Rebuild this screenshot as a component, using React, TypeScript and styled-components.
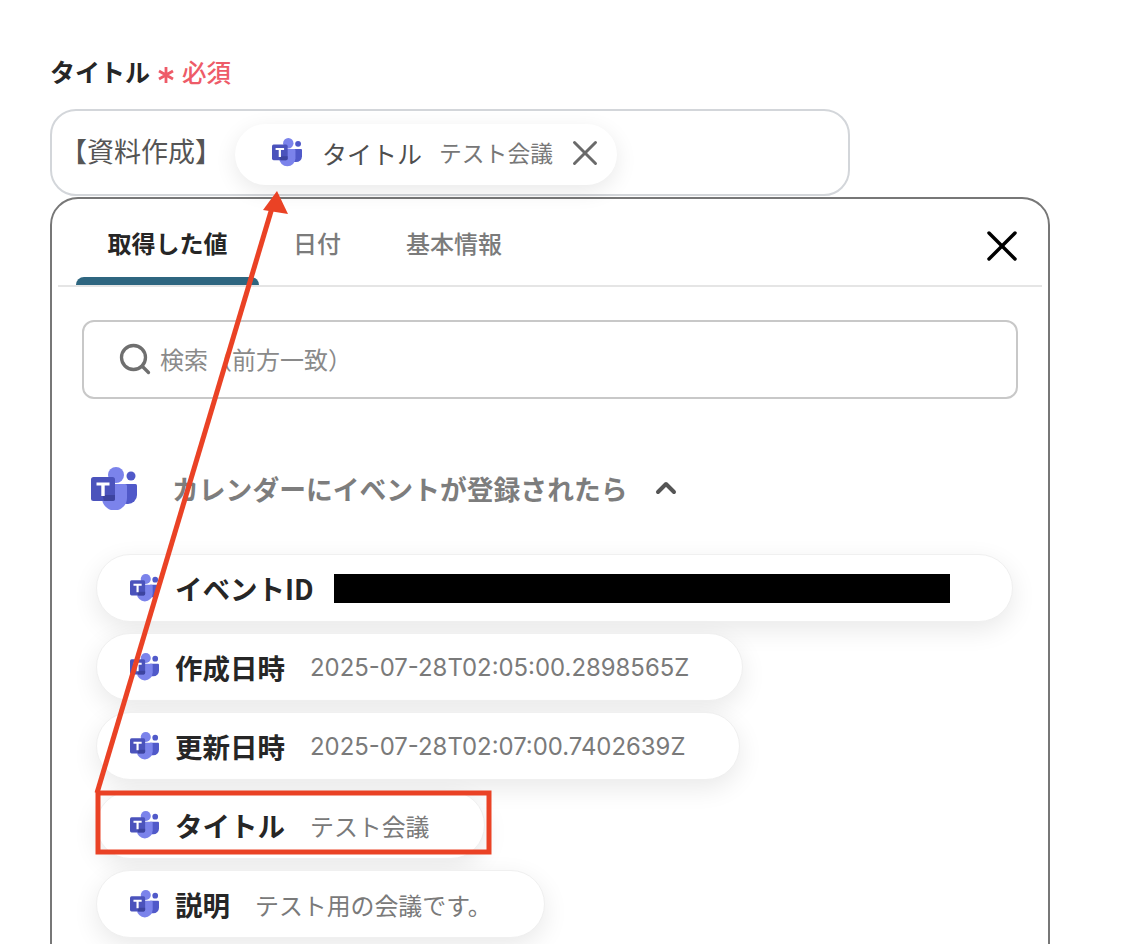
import React from "react";
import styled, { createGlobalStyle } from "styled-components";
import { X, Search, ChevronUp } from "lucide-react";

const Global = createGlobalStyle`
  html, body { margin: 0; padding: 0; background: #fff; overflow: hidden; }
  body { font-family: "Noto Sans CJK JP", "Noto Sans", sans-serif; }
`;

const Page = styled.div`
  position: relative;
  width: 1134px;
  height: 944px;
  overflow: hidden;
  box-sizing: border-box;
  padding: 50px 84px 0 50px;
  background: #fff;
`;

const FieldLabel = styled.div`
  display: flex;
  align-items: center;
  height: 42px;
  font-size: 25px;
  font-weight: 700;
  color: #262626;
`;

const Required = styled.span`
  display: flex;
  align-items: center;
  margin-left: 7px;
  font-size: 24.5px;
  font-weight: 500;
  color: #ee5b68;
`;

const Asterisk = styled.svg`
  width: 18px;
  height: 18px;
  margin: 7px 7px 0 0;
`;

const TextBox = styled.div`
  display: flex;
  align-items: center;
  box-sizing: border-box;
  width: 800px;
  height: 87px;
  margin-top: 17px;
  padding: 4px 0 0 8px;
  border: 2px solid #d3d6da;
  border-radius: 26px;
  color: #555;
`;

const Prefix = styled.span`
  width: 175px;
  flex: none;
  margin-bottom: 8px;
  font-size: 27px;
  white-space: nowrap;
`;

const Chip = styled.div`
  display: flex;
  align-items: center;
  box-sizing: border-box;
  width: 382px;
  height: 61px;
  padding: 0 0 4px 37px;
  border-radius: 31px;
  background: #fff;
  box-shadow: 0 6px 22px rgba(0, 0, 0, 0.09);
`;

const ChipName = styled.span`
  margin-left: 20px;
  font-size: 25px;
  color: #4e4e4e;
  white-space: nowrap;
`;

const ChipValue = styled.span`
  margin-left: 17px;
  font-size: 22.8px;
  color: #777;
  white-space: nowrap;
`;

const ChipClose = styled(X)`
  margin-left: 11px;
  color: #6a6a6a;
  flex: none;
`;

const Popup = styled.div`
  box-sizing: border-box;
  width: 1000px;
  height: 780px;
  margin-top: 1px;
  padding: 0 6px;
  border: 2px solid #777;
  border-radius: 28px;
  background: #fff;
`;

const TabBar = styled.div`
  display: flex;
  align-items: flex-start;
  justify-content: space-between;
  box-sizing: border-box;
  height: 88px;
  padding-left: 18px;
  border-bottom: 2px solid #e5e5e5;
`;

const Tabs = styled.div`
  display: flex;
  height: 86px;
`;

const Tab = styled.div<{ $active?: boolean; $width: number }>`
  position: relative;
  display: flex;
  align-items: center;
  justify-content: center;
  box-sizing: border-box;
  width: ${(p) => p.$width}px;
  padding-top: 1px;
  font-size: 24px;
  font-weight: ${(p) => (p.$active ? 700 : 500)};
  color: ${(p) => (p.$active ? "#262626" : "#7b7b7b")};

  &::after {
    content: "";
    display: ${(p) => (p.$active ? "block" : "none")};
    position: absolute;
    left: 0;
    right: 0;
    bottom: 0;
    height: 8px;
    background: #2e6680;
    border-radius: 8px 8px 0 0;
  }
`;

const CloseButton = styled(X)`
  flex: none;
  color: #000;
  margin: 21px 14px 0 0;
`;

const SearchBox = styled.div`
  display: flex;
  align-items: center;
  box-sizing: border-box;
  width: 936px;
  height: 79px;
  margin: 33px 0 0 24px;
  padding: 0 0 2px 33px;
  border: 2px solid #c8c8c8;
  border-radius: 12px;
  font-size: 24px;
  color: #8a8a8a;
`;

const SearchIcon = styled(Search)`
  color: #6f6f6f;
  margin-right: 7px;
  flex: none;
`;

const Section = styled.div`
  display: flex;
  align-items: center;
  height: 60px;
  margin: 59px 0 0 33px;
`;

const SectionTitle = styled.span`
  margin-left: 35px;
  font-size: 26.8px;
  font-weight: 700;
  color: #7d7d7d;
  white-space: nowrap;
`;

const SectionChevron = styled(ChevronUp)`
  margin-left: 22px;
  color: #555;
`;

const RowList = styled.div`
  display: flex;
  flex-direction: column;
  align-items: flex-start;
  gap: 11px;
  margin: 36px 0 0 38px;
`;

const Row = styled.div<{ $width: number }>`
  display: flex;
  align-items: center;
  box-sizing: border-box;
  width: ${(p) => p.$width}px;
  height: 68px;
  padding-left: 33px;
  border-radius: 34px;
  background: #fff;
  border: 1px solid #f0f0f0;
  box-shadow: 0 8px 26px rgba(0, 0, 0, 0.09);
`;

const RowName = styled.span`
  margin-left: 16px;
  font-size: 27.5px;
  font-weight: 700;
  color: #262626;
  white-space: nowrap;
`;

const RowValue = styled.span`
  margin-left: 25px;
  font-family: "Inter", "Noto Sans CJK JP", sans-serif;
  font-size: 23.9px;
  color: #7a7a7a;
  white-space: nowrap;
`;

const Redacted = styled.span`
  width: 616px;
  height: 29px;
  margin-left: 20px;
  background: #000;
`;

const Overlay = styled.svg`
  position: absolute;
  inset: 0;
  width: 1134px;
  height: 944px;
  pointer-events: none;
`;

const IconSvg = styled.svg`
  flex: none;
`;

const TeamsIcon = ({ size }: { size: number }) => (
  <IconSvg width={size} height={(size * 43) / 46} viewBox="0 0 46 43">
    <circle cx="40" cy="9" r="4.500" fill="#5059c9" />
    <path d="M32 17h12.500a1.500 1.500 0 0 1 1.500 1.500V28a9 9 0 0 1-9 9h-1a9 9 0 0 1-4-1z" fill="#5059c9" />
    <circle cx="25" cy="8" r="8" fill="#7b83eb" />
    <path d="M11 17h23a2 2 0 0 1 2 2v12a12 12 0 0 1-25 0z" fill="#7b83eb" />
    <rect x="0" y="10" width="24" height="24" rx="2.500" fill="#4b53bc" />
    <path d="M24 28v3.500a2.500 2.500 0 0 1-2.500 2.500H13l-1.500-6z" fill="#3d449f" />
    <path d="M5.500 15.500h13v3h-4.800v10.500h-3.400V18.500H5.500z" fill="#fff" />
  </IconSvg>
);

const rows = [
  { name: "作成日時", value: "2025-07-28T02:05:00.2898565Z", w: 647 },
  { name: "更新日時", value: "2025-07-28T02:07:00.7402639Z", w: 644 },
  { name: "タイトル", value: "テスト会議", w: 389 },
  { name: "説明", value: "テスト用の会議です。", w: 449 },
];

export default function App() {
  return (
    <Page>
      <Global />
      <FieldLabel>
        タイトル
        <Required>
          <Asterisk viewBox="0 0 18 18">
            <path d="M9 1v16M2 5l14 8M16 5L2 13" stroke="#ee5b68" strokeWidth="2.800" fill="none" />
          </Asterisk>
          必須
        </Required>
      </FieldLabel>
      <TextBox>
        <Prefix>【資料作成】</Prefix>
        <Chip>
          <TeamsIcon size={30} />
          <ChipName>タイトル</ChipName>
          <ChipValue>テスト会議</ChipValue>
          <ChipClose size={42} strokeWidth={1.7} />
        </Chip>
      </TextBox>
      <Popup>
        <TabBar>
          <Tabs>
            <Tab $active $width={183}>取得した値</Tab>
            <Tab $width={116}>日付</Tab>
            <Tab $width={158}>基本情報</Tab>
          </Tabs>
          <CloseButton size={52} strokeWidth={1.6} />
        </TabBar>
        <SearchBox>
          <SearchIcon size={36} strokeWidth={2.2} />
          検索（前方一致）
        </SearchBox>
        <Section>
          <TeamsIcon size={46} />
          <SectionTitle>カレンダーにイベントが登録されたら</SectionTitle>
          <SectionChevron size={32} strokeWidth={3} />
        </Section>
        <RowList>
          <Row $width={917}>
            <TeamsIcon size={29} />
            <RowName>イベントID</RowName>
            <Redacted />
          </Row>
          {rows.map((r) => (
            <Row key={r.name} $width={r.w}>
              <TeamsIcon size={29} />
              <RowName>{r.name}</RowName>
              <RowValue>{r.value}</RowValue>
            </Row>
          ))}
        </RowList>
      </Popup>
      <Overlay viewBox="0 0 1134 944">
        <rect x="98" y="793" width="391" height="59" fill="none" stroke="#ea4225" strokeWidth="5" />
        <line x1="97" y1="793" x2="272" y2="208" stroke="#ea4225" strokeWidth="5" />
        <polygon points="277,191 263,210 288,214" fill="#ea4225" />
      </Overlay>
    </Page>
  );
}
